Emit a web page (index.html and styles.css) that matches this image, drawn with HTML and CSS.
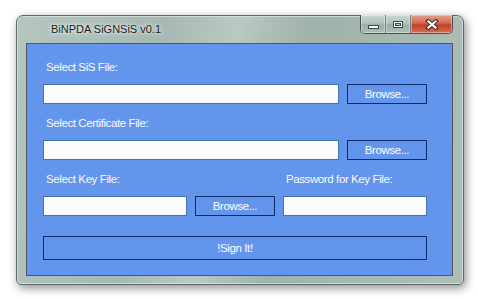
FILE: index.html
```html
<!DOCTYPE html>
<html lang="en">
<head>
  <meta charset="UTF-8">
  <title>BiNPDA SiGNSiS v0.1</title>
  <link rel="stylesheet" href="styles.css">
</head>
<body>

<div class="window">
  <div class="titlebar">
    <span class="title">BiNPDA SiGNSiS v0.1</span>
    <div class="caption-buttons">
      <div class="cap-btn cap-min"><span class="icon-min"></span></div>
      <div class="cap-btn cap-max"><span class="icon-max"></span></div>
      <div class="cap-btn cap-close">
        <svg width="14" height="11" viewBox="0 0 14 11">
          <path d="M3 2 L11 9 M11 2 L3 9" stroke="#3a3a3a" stroke-width="4" stroke-linecap="square"/>
          <path d="M3.3 2.3 L10.7 8.7 M10.7 2.3 L3.3 8.7" stroke="#fff" stroke-width="2" stroke-linecap="square"/>
        </svg>
      </div>
    </div>
  </div>

  <div class="client">
    <label class="lbl">Select SiS File:</label>
    <div class="row">
      <input type="text" class="field field-wide">
      <button class="btn">Browse...</button>
    </div>

    <label class="lbl">Select Certificate File:</label>
    <div class="row">
      <input type="text" class="field field-wide">
      <button class="btn">Browse...</button>
    </div>

    <div class="row row-labels">
      <label class="lbl">Select Key File:</label>
      <label class="lbl">Password for Key File:</label>
    </div>
    <div class="row">
      <input type="text" class="field field-half">
      <button class="btn">Browse...</button>
      <input type="password" class="field field-half">
    </div>

    <button class="btn btn-sign">!Sign It!</button>
  </div>
</div>

</body>
</html>
```

FILE: styles.css
```css
html, body {
    margin: 0;
    background: #fff;
}
body {
    padding: 15px 0 0 16px;
    width: 478px;
    height: 299px;
    box-sizing: border-box;
    overflow: hidden;
    font-family: 'Liberation Sans', Arial, sans-serif;
}
.window {
    width: 448px;
    height: 270px;
    box-sizing: border-box;
    border: 1px solid #5b6a68;
    border-radius: 7px 7px 5px 5px;
    background: linear-gradient(100deg, #b5c6c0 0%, #a6b8b2 30%, #b9c9c3 45%, #9fb2ab 60%, #aebfb9 100%);
    box-shadow: 2px 3px 10px rgba(0, 0, 0, 0.45), inset 0 0 0 1px rgba(255, 255, 255, 0.45);
    padding: 0 10px 8px 9px;
    display: flex;
    flex-direction: column;
}
.titlebar {
    height: 27px;
    display: flex;
    align-items: flex-start;
    justify-content: space-between;
}
.title {
    margin: 7px 0 0 25px;
    font-size: 11px;
    color: #1a1a1a;
    text-shadow: 0 0 6px rgba(255, 255, 255, 0.9), 0 0 3px rgba(255, 255, 255, 0.9);
}
.caption-buttons {
    display: flex;
    margin-top: -1px;
    margin-right: 0;
    border: 1px solid #44504e;
    border-top: none;
    border-radius: 0 0 5px 5px;
    overflow: hidden;
    height: 18px;
}
.cap-btn {
    display: flex;
    align-items: center;
    justify-content: center;
    height: 18px;
}
.cap-min, .cap-max {
    width: 24px;
    background: linear-gradient(#c9d5d1 0%, #b2c2bd 45%, #9aaea7 55%, #aebfb9 100%);
    border-right: 1px solid #6f7e7b;
    box-shadow: inset 0 0 0 1px rgba(255, 255, 255, 0.4);
}
.cap-close {
    width: 41px;
    background: linear-gradient(#e4a090 0%, #d46a52 45%, #c2402a 55%, #d46d55 100%);
    box-shadow: inset 0 0 0 1px rgba(255, 220, 210, 0.5);
}
.icon-min {
    width: 9px;
    height: 2px;
    margin-top: 6px;
    background: #fff;
    border: 1px solid #3f4646;
}
.icon-max {
    width: 8px;
    height: 5px;
    border: 1px solid #3f4646;
    background: #fff;
    box-shadow: inset 0 0 0 1px #fff, inset 0 0 0 2px #3f4646, inset 0 0 0 9px #bccac5;
}
.client {
    flex: 1;
    background: #6495ed;
    border: 1px solid #4f5a58;
    padding: 16px 25px 0 16px;
    display: flex;
    flex-direction: column;
}
.lbl {
    display: block;
    height: 14px;
    line-height: 14px;
    font-size: 11.5px;
    letter-spacing: -0.4px;
    color: #fafafa;
    padding-left: 3px;
    margin-bottom: 10px;
}
.row {
    display: flex;
    gap: 8px;
    margin-bottom: 12px;
}
.row-labels {
    margin-bottom: 0;
}
.row-labels .lbl:first-child {
    width: 229px;
}
.field {
    height: 20px;
    box-sizing: border-box;
    border: 1px solid #3f78b0;
    background: #fcfcfc;
    margin: 0;
    padding: 0 3px;
    font-size: 11px;
}
.field-wide {
    width: 296px;
}
.field-half {
    width: 144px;
}
.btn {
    width: 80px;
    height: 20px;
    box-sizing: border-box;
    border: 1px solid #0c2c68;
    background: #6495ed;
    color: #fff;
    font-family: 'Liberation Sans', Arial, sans-serif;
    font-size: 11.5px;
    letter-spacing: -0.4px;
    padding: 0;
    margin: 0;
}
.btn-sign {
    width: 384px;
    height: 24px;
    margin-top: 8px;
}
```
